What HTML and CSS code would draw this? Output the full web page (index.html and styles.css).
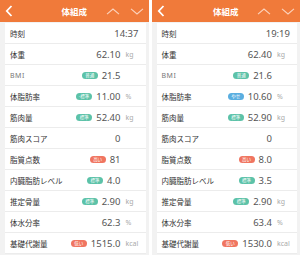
FILE: index.html
```html
<!DOCTYPE html>
<html lang="ja">
<head>
<meta charset="utf-8">
<link rel="stylesheet" href="styles.css">
</head>
<body>
<div class="screens">
  <section class="panel">
    <header class="bar">
      <svg class="back" width="8" height="12" viewBox="0 0 8 12"><path d="M6.5 1 L1.8 6 L6.5 11" fill="none" stroke="#fff" stroke-width="1.8"/></svg>
      <span class="title">体組成</span>
      <svg class="nav up" width="14" height="7" viewBox="0 0 14 7"><path d="M1 6.2 L7 1 L13 6.2" fill="none" stroke="#fbd3bd" stroke-width="1.1"/></svg>
      <svg class="nav" width="14" height="7" viewBox="0 0 14 7"><path d="M1 0.8 L7 6 L13 0.8" fill="none" stroke="#fbd3bd" stroke-width="1.1"/></svg>
    </header>
    <div class="body">
      <div class="card">
        <div class="row"><span class="lbl">時刻</span><span class="val time">14:37</span></div>
        <div class="row"><span class="lbl">体重</span><span class="val">62.10</span><span class="unit">kg</span></div>
        <div class="row"><span class="lbl light">BMI</span><span class="tag g">普通</span><span class="val">21.5</span><span class="unit"></span></div>
        <div class="row"><span class="lbl">体脂肪率</span><span class="tag g">-標準</span><span class="val">11.00</span><span class="unit">%</span></div>
        <div class="row"><span class="lbl">筋肉量</span><span class="tag g">標準</span><span class="val">52.40</span><span class="unit">kg</span></div>
        <div class="row"><span class="lbl">筋肉スコア</span><span class="val">0</span><span class="unit"></span></div>
        <div class="row"><span class="lbl">脂質点数</span><span class="tag r">高い</span><span class="val">81</span><span class="unit"></span></div>
        <div class="row"><span class="lbl">内臓脂肪レベル</span><span class="tag g">標準</span><span class="val">4.0</span><span class="unit"></span></div>
        <div class="row"><span class="lbl">推定骨量</span><span class="tag g">標準</span><span class="val">2.90</span><span class="unit">kg</span></div>
        <div class="row"><span class="lbl">体水分率</span><span class="val">62.3</span><span class="unit">%</span></div>
        <div class="row"><span class="lbl">基礎代謝量</span><span class="tag r">低い</span><span class="val">1515.0</span><span class="unit">kcal</span></div>
      </div>
    </div>
  </section>
  <section class="panel">
    <header class="bar">
      <svg class="back" width="8" height="12" viewBox="0 0 8 12"><path d="M6.5 1 L1.8 6 L6.5 11" fill="none" stroke="#fff" stroke-width="1.8"/></svg>
      <span class="title">体組成</span>
      <svg class="nav up" width="14" height="7" viewBox="0 0 14 7"><path d="M1 6.2 L7 1 L13 6.2" fill="none" stroke="#fbd3bd" stroke-width="1.1"/></svg>
      <svg class="nav" width="14" height="7" viewBox="0 0 14 7"><path d="M1 0.8 L7 6 L13 0.8" fill="none" stroke="#fbd3bd" stroke-width="1.1"/></svg>
    </header>
    <div class="body">
      <div class="card">
        <div class="row"><span class="lbl">時刻</span><span class="val time">19:19</span></div>
        <div class="row"><span class="lbl">体重</span><span class="val">62.40</span><span class="unit">kg</span></div>
        <div class="row"><span class="lbl light">BMI</span><span class="tag g">普通</span><span class="val">21.6</span><span class="unit"></span></div>
        <div class="row"><span class="lbl">体脂肪率</span><span class="tag b">やせ</span><span class="val">10.60</span><span class="unit">%</span></div>
        <div class="row"><span class="lbl">筋肉量</span><span class="tag g">標準</span><span class="val">52.90</span><span class="unit">kg</span></div>
        <div class="row"><span class="lbl">筋肉スコア</span><span class="val">0</span><span class="unit"></span></div>
        <div class="row"><span class="lbl">脂質点数</span><span class="tag r">高い</span><span class="val">8.0</span><span class="unit"></span></div>
        <div class="row"><span class="lbl">内臓脂肪レベル</span><span class="tag g">標準</span><span class="val">3.5</span><span class="unit"></span></div>
        <div class="row"><span class="lbl">推定骨量</span><span class="tag g">標準</span><span class="val">2.90</span><span class="unit">kg</span></div>
        <div class="row"><span class="lbl">体水分率</span><span class="val">63.4</span><span class="unit">%</span></div>
        <div class="row"><span class="lbl">基礎代謝量</span><span class="tag r">低い</span><span class="val">1530.0</span><span class="unit">kcal</span></div>
      </div>
    </div>
  </section>
</div>
</body>
</html>
```

FILE: styles.css
```css
* { box-sizing: border-box; }
html, body { margin: 0; padding: 0; background: #fff; }
body { width: 300px; height: 255px; overflow: hidden; font-family: "Noto Sans CJK JP", "Noto Sans", sans-serif; }
.screens { display: flex; gap: 3px; width: 300px; height: 255px; }
.panel { flex: 1; display: flex; flex-direction: column; background: #f2f2f2; min-width: 0; }
.bar { height: 22px; background: #f07a3a; display: flex; align-items: center; padding: 0 5px; position: relative; }
.back { flex: none; }
.title { position: absolute; left: 0; right: 0; text-align: center; color: #fff; font-weight: bold; font-size: 8.5px; line-height: 22px; pointer-events: none; }
.nav { flex: none; margin-left: 10px; }
.nav.up { margin-left: auto; }
.body { flex: 1; padding: 1px 3px 0 5px; }
.card { background: #fff; }
.row { height: 21px; display: flex; align-items: center; border-bottom: 1px solid #ececec; padding: 0 5px; }
.lbl { flex: 1; font-size: 7.5px; color: #333; white-space: nowrap; }
.lbl.light { color: #777; font-family: "Noto Sans", sans-serif; font-size: 7px; letter-spacing: 0.5px; }
.val { font-family: "Noto Sans", sans-serif; font-size: 9.5px; color: #555; text-align: right; white-space: nowrap; }
.val.time { margin-right: 2px; }
.unit { width: 20px; padding-left: 5px; font-family: "Noto Sans", sans-serif; font-size: 7px; color: #aaa; white-space: nowrap; }
.tag { height: 7px; min-width: 16px; padding: 0 3px; border-radius: 4px; color: #fff; font-size: 4.5px; line-height: 7px; text-align: center; margin-right: 4px; white-space: nowrap; }
.tag.g { background: #5cc2a8; }
.tag.r { background: #f07560; }
.tag.b { background: #5aaee0; }
```
